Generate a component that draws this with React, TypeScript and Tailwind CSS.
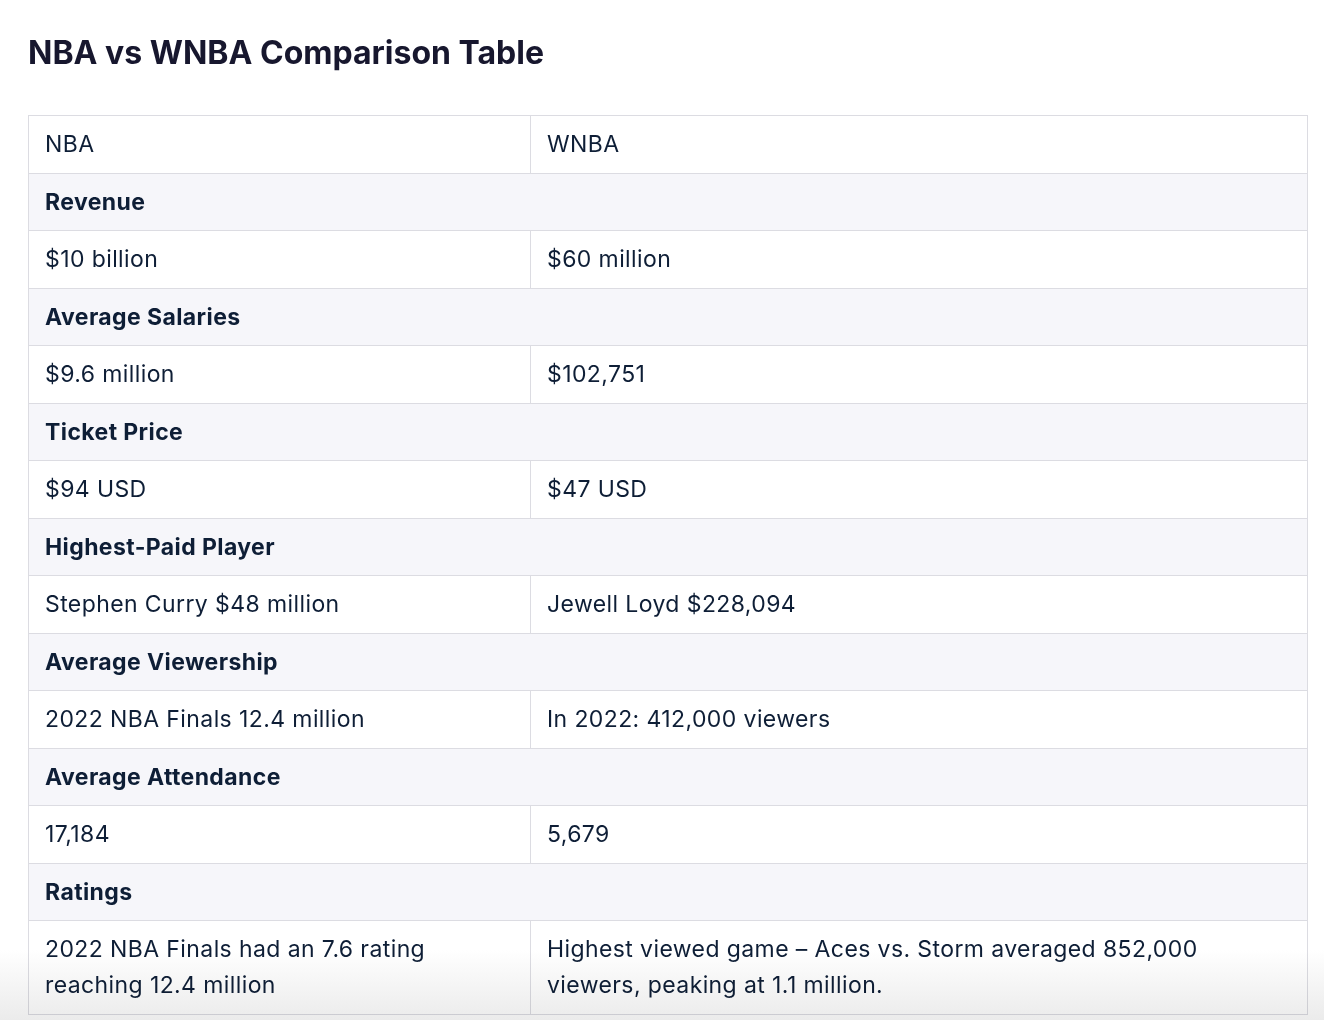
const rows: { label: string; nba: string; wnba: string }[] = [
  { label: "Revenue", nba: "$10 billion", wnba: "$60 million" },
  { label: "Average Salaries", nba: "$9.6 million", wnba: "$102,751" },
  { label: "Ticket Price", nba: "$94 USD", wnba: "$47 USD" },
  { label: "Highest-Paid Player", nba: "Stephen Curry $48 million", wnba: "Jewell Loyd $228,094" },
  { label: "Average Viewership", nba: "2022 NBA Finals 12.4 million", wnba: "In 2022: 412,000 viewers" },
  { label: "Average Attendance", nba: "17,184", wnba: "5,679" },
  {
    label: "Ratings",
    nba: "2022 NBA Finals had an 7.6 rating reaching 12.4 million",
    wnba: "Highest viewed game – Aces vs. Storm averaged 852,000 viewers, peaking at 1.1 million.",
  },
];

const cell = "border border-[#dcdce2] px-4 py-[10.25px] align-top";

export default function App() {
  return (
    <div className="relative min-h-[1020px] bg-white font-['Inter',sans-serif] text-[#0e1e36]">
      <div className="pl-[28px] pt-[33px]">
        <h1 className="text-[32px] leading-[40px] font-bold text-[#17172e]">
          NBA vs WNBA Comparison Table
        </h1>

        <table className="mt-[42px] w-[1280px] border-collapse table-fixed text-[23px] leading-[36px] tracking-[0.4px]">
          <colgroup>
            <col className="w-[502px]" />
            <col />
          </colgroup>
          <tbody>
            <tr className="bg-white">
              <td className={cell}>NBA</td>
              <td className={cell}>WNBA</td>
            </tr>
            {rows.map((r) => (
              <>
                <tr key={r.label + "-h"} className="bg-[#f6f6fa]">
                  <td colSpan={2} className={cell + " font-bold"}>
                    {r.label}
                  </td>
                </tr>
                <tr key={r.label} className="bg-white">
                  <td className={cell}>{r.nba}</td>
                  <td className={cell}>{r.wnba}</td>
                </tr>
              </>
            ))}
          </tbody>
        </table>
      </div>

      {/* bottom fade */}
      <div className="pointer-events-none absolute inset-x-0 top-[950px] h-[70px] mix-blend-multiply bg-gradient-to-b from-white to-[#ebebeb]" />
    </div>
  );
}
